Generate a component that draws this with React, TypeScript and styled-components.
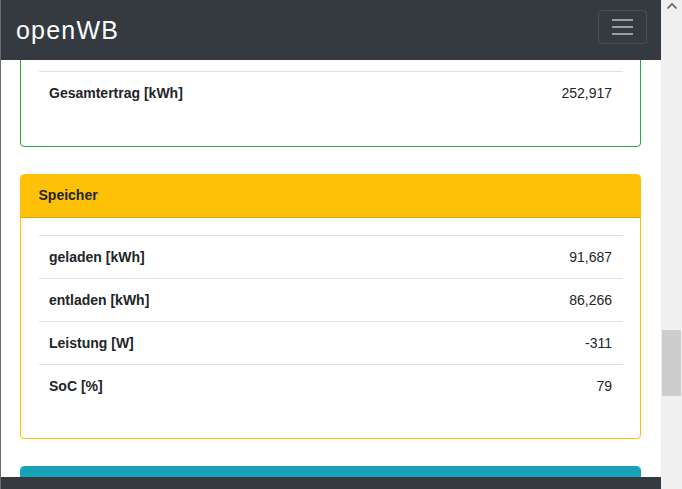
import { useLayoutEffect, useRef } from "react";
import styled, { createGlobalStyle } from "styled-components";

const GlobalStyle = createGlobalStyle`
  html, body {
    margin: 0;
    padding: 0;
    overflow: hidden;
  }
  body {
    font-family: "Liberation Sans", Arial, sans-serif;
    font-size: 14px;
    line-height: 1.5;
    color: #212529;
    background: #ffffff;
  }
`;

const colors: Record<string, string> = {
  success: "#28a745",
  warning: "#ffc107",
  info: "#17a2b8",
};

const Window = styled.div`
  display: flex;
  width: 682px;
  height: 489px;
`;

const Frame = styled.div`
  position: relative;
  flex: 1;
  height: 100%;
  border-left: 1px solid #6b6b6b;
`;

const Scroller = styled.div`
  height: 100%;
  overflow: hidden;
`;

const Navbar = styled.nav`
  position: absolute;
  top: 0;
  left: 0;
  right: 0;
  height: 60px;
  display: flex;
  align-items: center;
  justify-content: space-between;
  padding: 0 14px 0 15px;
  background: #343a40;
  z-index: 2;
`;

const Brand = styled.a`
  color: #ffffff;
  font-size: 25px;
  letter-spacing: 1.2px;
  line-height: 1;
  text-decoration: none;
`;

const Toggler = styled.button`
  width: 49px;
  height: 34px;
  margin-top: -6px;
  display: flex;
  flex-direction: column;
  align-items: center;
  justify-content: center;
  gap: 5px;
  background: transparent;
  border: 1px solid rgba(255, 255, 255, 0.1);
  border-radius: 4px;
  padding: 0;
`;

const TogglerBar = styled.span`
  display: block;
  width: 21px;
  height: 2px;
  background: rgba(255, 255, 255, 0.5);
`;

const Footer = styled.div`
  position: absolute;
  left: 0;
  right: 0;
  bottom: 0;
  height: 12px;
  background: #343a40;
  z-index: 2;
`;

const Container = styled.div`
  padding: 80px 20px 40px 19px;
  display: flex;
  flex-direction: column;
  gap: 27px;
`;

const Card = styled.div<{ $tone: string }>`
  border: 1px solid ${({ $tone }) => colors[$tone]};
  border-radius: 4px;
  background: #ffffff;
  overflow: hidden;
`;

const CardHeader = styled.div<{ $tone: string }>`
  padding: 10.5px 17.5px;
  background: ${({ $tone }) => colors[$tone]};
  color: ${({ $tone }) => ($tone === "warning" ? "#212529" : "#ffffff")};
  font-weight: bold;
  border-bottom: 1px solid rgba(0, 0, 0, 0.125);
`;

const CardBody = styled.div`
  padding: 17px 17.5px 17.5px;
`;

const Table = styled.table`
  width: 100%;
  border-collapse: collapse;
  margin-bottom: 14px;
`;

const Cell = styled.td<{ $value?: boolean }>`
  padding: 11px 10.5px 10px;
  border-top: 1px solid #dee2e6;
  text-align: ${({ $value }) => ($value ? "right" : "left")};
  font-weight: ${({ $value }) => ($value ? "normal" : "bold")};
`;

const Scrollbar = styled.div`
  width: 21px;
  height: 100%;
  background: #f0f0f0;
  display: flex;
  flex-direction: column;
  align-items: center;
`;

const Arrow = styled.svg`
  margin-top: 2px;
  width: 12px;
  height: 8px;
`;

const Thumb = styled.div`
  margin-top: 320px;
  width: 19px;
  height: 66px;
  background: #cdcdcd;
`;

type Row = [string, string];

const sections: { tone: string; title: string; rows: Row[] }[] = [
  {
    tone: "success",
    title: "PV",
    rows: [
      ["Leistung [W]", "0"],
      ["Tagesertrag [kWh]", "0,000"],
      ["Gesamtertrag [kWh]", "252,917"],
    ],
  },
  {
    tone: "warning",
    title: "Speicher",
    rows: [
      ["geladen [kWh]", "91,687"],
      ["entladen [kWh]", "86,266"],
      ["Leistung [W]", "-311"],
      ["SoC [%]", "79"],
    ],
  },
  {
    tone: "info",
    title: "EVU",
    rows: [["Bezug [kWh]", "1.204,512"]],
  },
];

export default function App() {
  const scroller = useRef<HTMLDivElement>(null);
  const anchor = useRef<HTMLTableRowElement>(null);

  useLayoutEffect(() => {
    if (scroller.current && anchor.current) {
      const top =
        anchor.current.getBoundingClientRect().top -
        scroller.current.getBoundingClientRect().top;
      scroller.current.scrollTop = top - 72;
    }
  }, []);

  return (
    <>
      <GlobalStyle />
      <Window>
        <Frame>
          <Navbar>
            <Brand href="#">openWB</Brand>
            <Toggler aria-label="Menü">
              <TogglerBar />
              <TogglerBar />
              <TogglerBar />
            </Toggler>
          </Navbar>
          <Scroller ref={scroller}>
            <Container>
              {sections.map((section) => (
                <Card key={section.title} $tone={section.tone}>
                  <CardHeader $tone={section.tone}>{section.title}</CardHeader>
                  <CardBody>
                    <Table>
                      <tbody>
                        {section.rows.map(([label, value]) => (
                          <tr
                            key={label}
                            ref={label === "Gesamtertrag [kWh]" ? anchor : undefined}
                          >
                            <Cell>{label}</Cell>
                            <Cell $value>{value}</Cell>
                          </tr>
                        ))}
                      </tbody>
                    </Table>
                  </CardBody>
                </Card>
              ))}
            </Container>
          </Scroller>
          <Footer />
        </Frame>
        <Scrollbar>
          <Arrow viewBox="0 0 12 8">
            <path d="M1.5 6.5 L6 2 L10.5 6.5" fill="none" stroke="#606060" strokeWidth="1.6" />
          </Arrow>
          <Thumb />
        </Scrollbar>
      </Window>
    </>
  );
}
